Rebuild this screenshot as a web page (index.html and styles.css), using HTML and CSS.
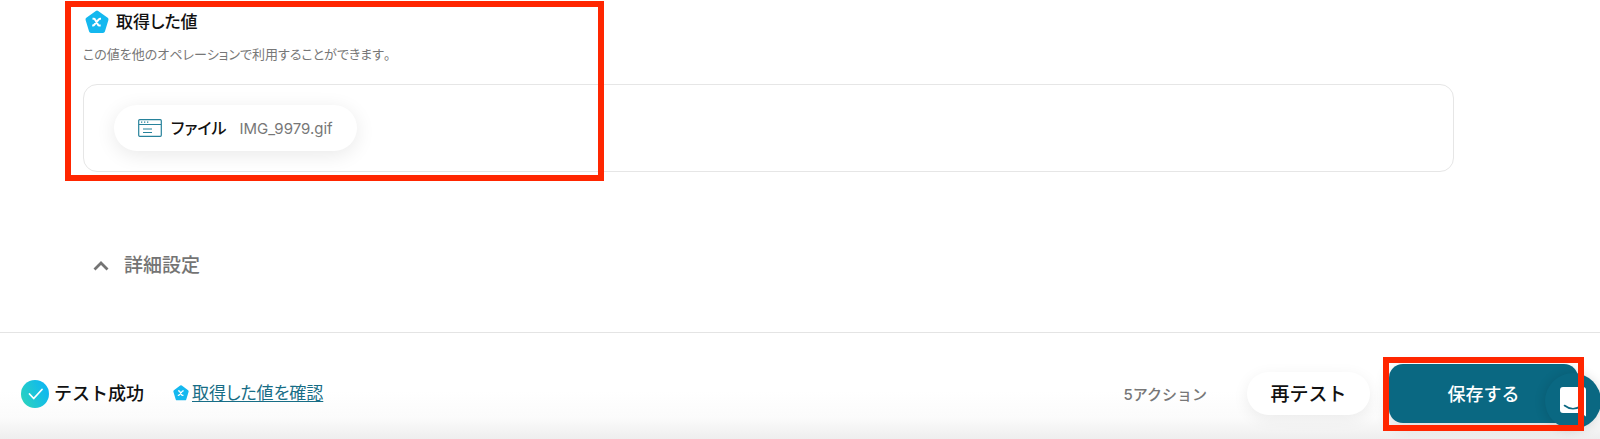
FILE: index.html
```html
<!DOCTYPE html>
<html lang="ja">
<head>
<meta charset="utf-8">
<meta name="viewport" content="width=device-width, initial-scale=1">
<title>取得した値</title>
<link rel="stylesheet" href="styles.css">
</head>
<body>
<svg class="defs" width="0" height="0" aria-hidden="true">
  <symbol id="value-icon" viewBox="0 0 24 24">
    <path d="M12 2.500 21.500 9.400 18 21H6L2.500 9.400Z" fill="#14b8ef" stroke="#14b8ef" stroke-width="4" stroke-linejoin="round"/>
    <path d="M7.500 8.700h1.300q.8 0 1.200.8l3 5.200q.4.800 1.200.8h1.500M16 8.700h-.8q-.8 0-1.400.8l-4.400 5.200q-.6.800-1.400.8h-.8" fill="none" stroke="#fff" stroke-width="2"/>
  </symbol>
</svg>
<main class="content">
  <section class="values">
    <h2 class="values-title"><svg class="title-icon" aria-hidden="true"><use href="#value-icon"/></svg>取得した値</h2>
    <p class="values-note">この値を他のオペレーションで利用することができます。</p>
    <div class="values-card">
      <div class="value-chip">
        <svg class="chip-icon" viewBox="0 0 24 18" fill="none" stroke="#27829b" aria-hidden="true">
          <rect x=".7" y=".7" width="22.600" height="16.600" rx="1" stroke-width="1.200"/>
          <path d="M1 5.500h22" stroke-width="1"/>
          <path d="M3 3.200h1.300M6 3.200h1.300M9 3.200h1.300" stroke-width="1.200"/>
          <path d="M5 10h9M5 13.500h9" stroke-width="1.200"/>
        </svg>
        <span class="chip-name">ファイル</span>
        <span class="chip-value">IMG_9979.gif</span>
      </div>
    </div>
  </section>
  <button class="advanced" type="button" aria-expanded="true">
    <svg class="chevron" viewBox="0 0 16 10" aria-hidden="true"><path d="M1.500 8.500 8 2l6.500 6.500" fill="none" stroke="#747474" stroke-width="2.800"/></svg>
    詳細設定
  </button>
</main>
<footer class="bar">
  <div class="result">
    <svg class="result-icon" viewBox="0 0 28 28" aria-hidden="true">
      <defs><linearGradient id="ok" x1="0" y1=".8" x2="1" y2=".3"><stop offset="0" stop-color="#2bd3bd"/><stop offset=".9" stop-color="#10b9ee"/></linearGradient></defs>
      <circle cx="14" cy="14" r="14" fill="url(#ok)"/>
      <path d="m8.500 14 4.200 4.500 8.300-9" fill="none" stroke="#fff" stroke-width="1.800" stroke-linecap="round" stroke-linejoin="round"/>
    </svg>
    テスト成功
  </div>
  <a class="check-link" href="#"><svg class="link-icon" aria-hidden="true"><use href="#value-icon"/></svg><span class="link-text">取得した値を確認</span></a>
  <span class="count">5アクション</span>
  <button class="retest" type="button">再テスト</button>
  <button class="save" type="button">保存する</button>
</footer>
<button class="chat" type="button" aria-label="チャット">
  <svg class="chat-icon" viewBox="0 0 26 30" aria-hidden="true">
    <path d="M3 0h20a3 3 0 0 1 3 3v26.500l-5-3.500H3a3 3 0 0 1-3-3V3a3 3 0 0 1 3-3Z" fill="#fff"/>
    <path d="M4.500 18.500q8.500 6.500 17 0" fill="none" stroke="#0a6882" stroke-width="1.600" stroke-linecap="round"/>
  </svg>
</button>
<div class="mark mark-values"></div>
<div class="mark mark-save"></div>
</body>
</html>
```
FILE: styles.css
```css
* { box-sizing: border-box; }

body {
  margin: 0;
  min-height: 100vh;
  display: flex;
  flex-direction: column;
  position: relative;
  overflow-x: hidden;
  background: #fff;
  color: #111;
  font-family: Inter, "Noto Sans CJK JP", sans-serif;
  font-size: 16px;
  font-weight: 500;
}

button {
  border: 0;
  background: none;
  color: inherit;
  font: inherit;
  cursor: pointer;
}

.defs { position: absolute; }

.content {
  flex: 1;
  padding: 9px 146px 47px 83px;
}

.values-title {
  display: flex;
  align-items: center;
  gap: 7px;
  margin: 0;
  padding-left: 2px;
  font-size: 17px;
  font-weight: 500;
  font-feature-settings: "palt";
  line-height: 26px;
}

.title-icon { width: 24px; height: 24px; }

.values-note {
  margin: 9px 0 19px;
  color: #777;
  font-size: 13px;
  font-weight: 400;
  font-feature-settings: "palt";
  font-kerning: none;
  line-height: 21px;
}

.values-card {
  display: flex;
  padding: 20px 30px;
  border: 1px solid #e6e6e6;
  border-radius: 14px;
}

.value-chip {
  display: flex;
  align-items: center;
  gap: 9px;
  height: 46px;
  padding: 0 24px;
  border-radius: 23px;
  background: #fff;
  box-shadow: 0 4px 20px rgba(0, 0, 0, .09);
}

.chip-icon { width: 24px; height: 18px; }

.chip-name {
  padding-right: 4px;
  font-size: 16px;
  font-feature-settings: "palt";
  font-kerning: none;
  line-height: 24px;
}

.chip-value {
  color: #777;
  font-size: 15px;
  font-weight: 400;
}

.advanced {
  display: flex;
  align-items: center;
  gap: 15px;
  margin-top: 80px;
  padding: 0 10px;
  color: #747474;
  font-size: 19px;
  line-height: 28px;
}

.chevron { width: 16px; height: 10px; }

.bar {
  display: flex;
  align-items: center;
  height: 107px;
  padding: 15px 22px 0 21px;
  border-top: 1px solid #e4e4e4;
  background: linear-gradient(#fff 55%, #fbfbfb 80%, #eee);
}

.result {
  display: flex;
  align-items: center;
  gap: 5px;
  font-size: 18px;
  line-height: 26px;
}

.result-icon { width: 28px; height: 28px; }

.check-link {
  display: flex;
  align-items: center;
  gap: 3px;
  margin-left: 29px;
  padding-bottom: 2px;
  color: #176d86;
  font-size: 17px;
  font-weight: 400;
  font-feature-settings: "palt";
  line-height: 24px;
  text-decoration: none;
}

.link-icon { width: 16px; height: 16px; }

.link-text {
  text-decoration: underline;
  text-underline-offset: 2px;
}

.count {
  margin-left: auto;
  color: #777;
  font-size: 15px;
}

.retest {
  width: 123px;
  height: 43px;
  margin: 0 19px 0 40px;
  padding: 0 0 3px;
  border-radius: 22px;
  background: #fff;
  box-shadow: 0 4px 16px rgba(0, 0, 0, .07);
  font-size: 19px;
}

.save {
  width: 189px;
  height: 59px;
  padding: 0 0 2px;
  border-radius: 14px;
  background: #0a6882;
  box-shadow: 0 4px 16px rgba(0, 0, 0, .12);
  color: #fff;
  font-size: 18px;
}

.chat {
  position: absolute;
  right: -1px;
  bottom: 10px;
  display: grid;
  place-items: center;
  width: 56px;
  height: 56px;
  padding: 2px 0 0;
  border-radius: 50%;
  background: #0a6882;
  box-shadow: 0 1px 12px rgba(0, 0, 0, .14);
}

.chat-icon { width: 26px; height: 30px; }

.mark {
  position: absolute;
  border: 6px solid #ff2600;
  pointer-events: none;
}

.mark-values {
  top: 1px;
  left: 65px;
  width: 539px;
  height: 180px;
}

.mark-save {
  right: 16px;
  bottom: 8px;
  width: 201px;
  height: 74px;
}
```
